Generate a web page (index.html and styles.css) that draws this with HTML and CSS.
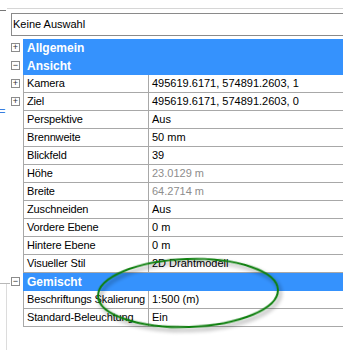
FILE: index.html
```html
<!DOCTYPE html>
<html lang="de">
<head>
  <meta charset="UTF-8" />
  <title>Eigenschaften</title>
  <link rel="stylesheet" href="styles.css">
</head>
<body>

<div class="panel">
  <!-- Hintergrund-Reste links -->
  <span class="bg-stub"></span>
  <span class="bg-mark">=</span>
  <span class="bg-vline"></span>
  <span class="bg-hline"></span>

  <div class="topline"></div>

  <div class="select">Keine Auswahl</div>

  <div class="grid">
    <div class="row cat">
      <span class="toggle">+</span>
      <div class="cat-name">Allgemein</div>
    </div>
    <div class="row cat">
      <span class="toggle">&minus;</span>
      <div class="cat-name">Ansicht</div>
    </div>

    <div class="row">
      <span class="toggle">+</span>
      <div class="name">Kamera</div>
      <div class="value">495619.6171, 574891.2603, 1</div>
    </div>
    <div class="row">
      <span class="toggle">+</span>
      <div class="name">Ziel</div>
      <div class="value">495619.6171, 574891.2603, 0</div>
    </div>
    <div class="row">
      <span class="gutter"></span>
      <div class="name">Perspektive</div>
      <div class="value">Aus</div>
    </div>
    <div class="row">
      <span class="gutter"></span>
      <div class="name">Brennweite</div>
      <div class="value">50 mm</div>
    </div>
    <div class="row">
      <span class="gutter"></span>
      <div class="name">Blickfeld</div>
      <div class="value">39</div>
    </div>
    <div class="row">
      <span class="gutter"></span>
      <div class="name">Höhe</div>
      <div class="value readonly">23.0129 m</div>
    </div>
    <div class="row">
      <span class="gutter"></span>
      <div class="name">Breite</div>
      <div class="value readonly">64.2714 m</div>
    </div>
    <div class="row">
      <span class="gutter"></span>
      <div class="name">Zuschneiden</div>
      <div class="value">Aus</div>
    </div>
    <div class="row">
      <span class="gutter"></span>
      <div class="name">Vordere Ebene</div>
      <div class="value">0 m</div>
    </div>
    <div class="row">
      <span class="gutter"></span>
      <div class="name">Hintere Ebene</div>
      <div class="value">0 m</div>
    </div>
    <div class="row">
      <span class="gutter"></span>
      <div class="name">Visueller Stil</div>
      <div class="value">2D Drahtmodell</div>
    </div>

    <div class="row cat">
      <span class="toggle">&minus;</span>
      <div class="cat-name">Gemischt</div>
    </div>
    <div class="row">
      <span class="gutter"></span>
      <div class="name">Beschriftungs Skalierung</div>
      <div class="value">1:500 (m)</div>
    </div>
    <div class="row">
      <span class="gutter"></span>
      <div class="name">Standard-Beleuchtung</div>
      <div class="value">Ein</div>
    </div>
  </div>

  <!-- Markierung -->
  <svg class="highlight" width="200" height="90" viewBox="0 0 200 90">
    <defs>
      <filter id="shadow" x="-10%" y="-20%" width="120%" height="150%">
        <feGaussianBlur in="SourceAlpha" stdDeviation="2" />
        <feOffset dx="2" dy="3" result="blur" />
        <feComponentTransfer><feFuncA type="linear" slope="0.45" /></feComponentTransfer>
        <feMerge><feMergeNode /><feMergeNode in="SourceGraphic" /></feMerge>
      </filter>
    </defs>
    <ellipse cx="95" cy="40" rx="90" ry="34" fill="none" stroke="#107f10" stroke-width="2"
             transform="rotate(-2 95 40)" filter="url(#shadow)" />
  </svg>
</div>

</body>
</html>
```

FILE: styles.css
```css
body {
  margin: 0;
  background-color: #ffffff;
  font-family: "Liberation Sans", Arial, sans-serif;
  font-size: 11px;
  color: #000;
  overflow: hidden;
}
.panel {
  position: relative;
  width: 343px;
  height: 350px;
  overflow: hidden;
}
.topline {
  margin-top: 8px;
  margin-left: 7px;
  width: 400px;
  border-top: 1px solid #d6d6d6;
}
.select {
  margin-top: 4px;
  margin-left: 11px;
  width: 400px;
  height: 23px;
  line-height: 21px;
  border: 1px solid #8a8a8a;
  border-right: none;
  padding-left: 1px;
  box-sizing: border-box;
}
.grid {
  margin-top: 3px;
  margin-left: 11px;
  width: 420px;
}
.row {
  display: flex;
  height: 18px;
}
.gutter {
  flex: 0 0 12px;
}
.toggle {
  box-sizing: border-box;
  flex: 0 0 9px;
  width: 9px;
  height: 9px;
  margin: 4px 3px 0 0;
  border: 1px solid #8c8c8c;
  background-color: #fff;
  font-size: 9px;
  line-height: 6px;
  text-align: center;
  color: #333;
}
.name, .value {
  box-sizing: border-box;
  height: 18px;
  line-height: 17px;
  border-bottom: 1px solid #a8a8a8;
  white-space: nowrap;
  overflow: hidden;
}
.name {
  flex: 0 0 126px;
  border-left: 1px solid #a8a8a8;
  border-right: 1px solid #a8a8a8;
  padding-left: 3px;
  letter-spacing: -0.15px;
}
.value {
  flex: 1;
  padding-left: 3px;
}
.readonly {
  color: #8d8d8d;
}
.cat-name {
  flex: 1;
  height: 18px;
  line-height: 18px;
  background-color: #3592fd;
  color: #fff;
  font-weight: bold;
  font-size: 12px;
  padding-left: 4px;
}
.highlight {
  position: absolute;
  left: 93px;
  top: 253px;
}
.bg-stub {
  position: absolute;
  left: 0;
  top: 10px;
  width: 6px;
  border-top: 1px solid #777;
}
.bg-mark {
  position: absolute;
  left: -1px;
  top: 105px;
  color: #3a7de0;
  font-size: 11px;
}
.bg-vline {
  position: absolute;
  left: 6px;
  top: 283px;
  height: 70px;
  border-left: 1px solid #dcdcdc;
}
.bg-hline {
  position: absolute;
  left: 0;
  top: 283px;
  width: 10px;
  border-top: 1px solid #b8b8b8;
}
```
